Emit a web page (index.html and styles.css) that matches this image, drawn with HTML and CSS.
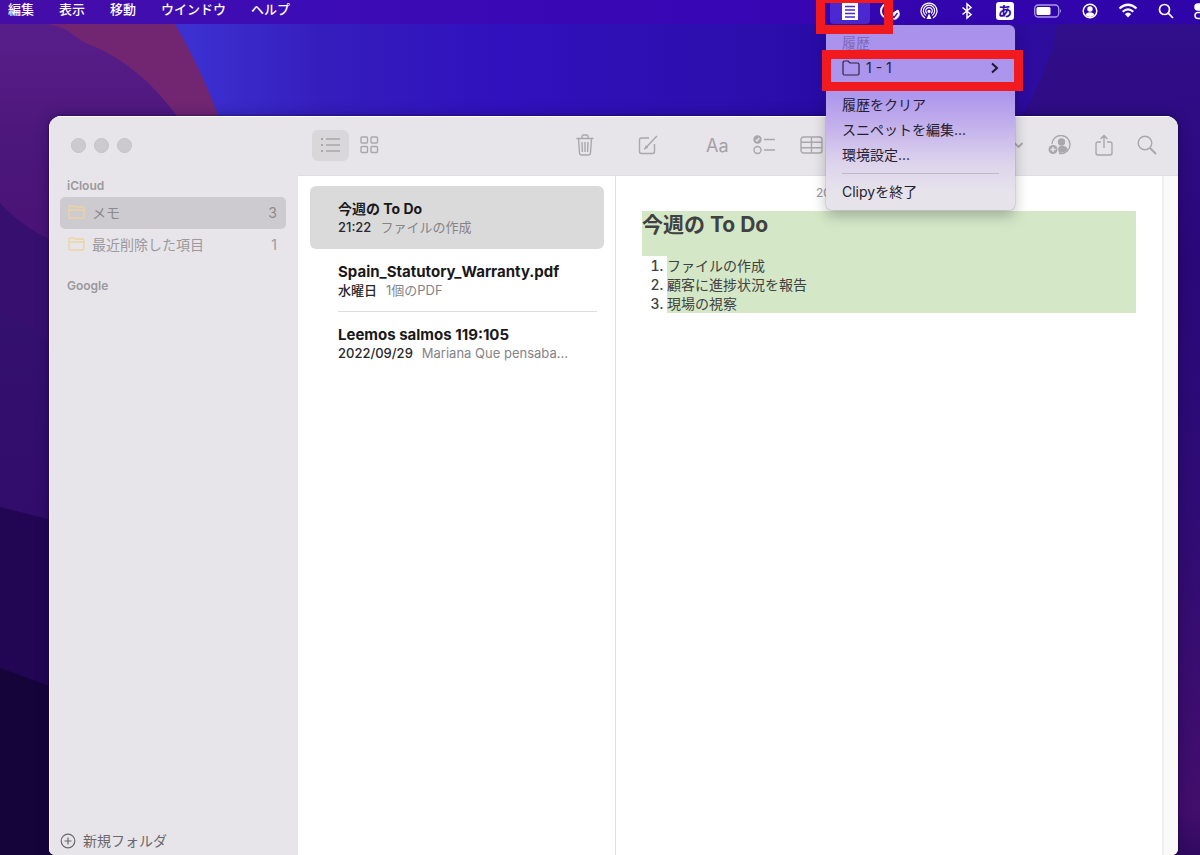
FILE: index.html
```html
<!DOCTYPE html>
<html lang="ja">
<head>
<meta charset="utf-8">
<title>メモ</title>
<link rel="stylesheet" href="styles.css">
</head>
<body class="desktop">
<svg class="wallpaper" viewBox="0 0 1200 855" preserveAspectRatio="none" aria-hidden="true">
  <defs>
    <linearGradient id="blue" x1="0" y1="0" x2="1" y2="0">
      <stop offset="0.16" stop-color="#3c30d0"/><stop offset="0.27" stop-color="#351dbd"/>
      <stop offset="0.42" stop-color="#3011bd"/><stop offset="0.6" stop-color="#2c0fae"/>
      <stop offset="0.72" stop-color="#270aa4"/><stop offset="1" stop-color="#320e98"/>
    </linearGradient>
    <linearGradient id="right" x1="0" y1="0" x2="0" y2="1">
      <stop offset="0" stop-color="#320f8c"/><stop offset="0.3" stop-color="#2a087a"/>
      <stop offset="0.6" stop-color="#2f0c74"/><stop offset="0.95" stop-color="#430e6c"/><stop offset="1" stop-color="#300a60"/>
    </linearGradient>
    <linearGradient id="plum" x1="0" y1="0" x2="0" y2="1">
      <stop offset="0.08" stop-color="#571d88"/><stop offset="0.5" stop-color="#4c177b"/><stop offset="1" stop-color="#491374"/>
    </linearGradient>
    <linearGradient id="indigo" x1="0" y1="0" x2="0" y2="1">
      <stop offset="0" stop-color="#34106f"/><stop offset="1" stop-color="#2d0763"/>
    </linearGradient>
  </defs>
  <rect width="1200" height="855" fill="url(#blue)"/>
  <path d="M1060 0Q1056 60 1022 116V855H1200V0Z" fill="url(#right)"/>
  <path d="M0 0H160Q196 55 220 120V300H0Z" fill="#722672"/>
  <path d="M0 24H48C70 28 72 36 88 44C125 58 155 85 180 120V260H0Z" fill="url(#plum)"/>
  <path d="M0 203Q25 230 60 244V855H0Z" fill="#37106f"/>
  <path d="M0 312Q30 325 60 352V855H0Z" fill="url(#indigo)"/>
  <path d="M0 507L60 522V855H0Z" fill="#220653"/>
  <path d="M0 668L60 690V855H0Z" fill="#150439"/>
</svg>

<header class="menubar">
  <nav class="menubar-menus">
    <button>編集</button><button>表示</button><button>移動</button><button>ウインドウ</button><button>ヘルプ</button>
  </nav>
  <div class="status">
    <button class="clipy" aria-label="Clipy"><svg width="18" height="20" viewBox="0 0 18 20"><path fill="#fff" d="M1 1H17V19H1Z"/><path stroke="#4b28d0" stroke-width="1.5" d="M4 5.5H14M4 9H14M4 12.5H14M4 16H14"/></svg></button>
    <svg width="22" height="20" viewBox="0 0 22 20" fill="none" stroke="#fff" stroke-width="2"><path d="M11 2A8 8 0 0 0 3 10A7 7 0 0 0 9 17"/><path d="M7 8Q8 12 12 12"/><path fill="#fff" stroke-width="1" d="M11.500 14Q15 12 20 9Q23 14 19 17.500Q15 20 11.500 14Z"/><path stroke="#3706b0" stroke-width="1.300" d="M14 14.500L16 16.500L19.500 12"/></svg>
    <svg width="18" height="18" viewBox="0 0 18 18" fill="none" stroke="#fff" stroke-width="1.2"><path d="M5 16A8 8 0 1 1 13 16M6 13.5A5.6 5.6 0 1 1 12 13.5M7 11.5A3.3 3.3 0 1 1 11 11.5"/><circle cx="9" cy="9.3" r="1" fill="#fff"/><path fill="#fff" stroke="none" d="M9 11.500L11.500 17H6.500Z"/></svg>
    <svg width="18" height="18" viewBox="0 0 18 18" fill="none" stroke="#fff" stroke-width="1.5"><path d="M4.500 5.500L13 12.500L9 16V2L13 5.500L4.500 12.500"/></svg>
    <span class="ime">あ</span>
    <svg width="28" height="18" viewBox="0 0 28 18"><rect x=".7" y="3" width="24" height="12" rx="3.500" fill="none" stroke="#a99be6" stroke-width="1.3"/><rect x="2.500" y="5" width="14" height="8" rx="1.500" fill="#fff"/><path fill="#a99be6" d="M26 7Q28 9 26 11Z"/></svg>
    <svg width="16" height="18" viewBox="0 0 16 18"><circle cx="8" cy="9" r="6.800" fill="none" stroke="#fff" stroke-width="1.500"/><circle cx="8" cy="7" r="2.700" fill="#fff"/><path fill="#fff" d="M3.500 13Q4.500 10.300 8 10.300T12.500 13Q8 17 3.500 13Z"/></svg>
    <svg width="20" height="18" viewBox="0 0 20 18" fill="none" stroke="#fff" stroke-width="2.200"><path d="M1.500 6.500Q10-1 18.500 6.500M4.700 9.800Q10 5 15.300 9.800"/><path fill="#fff" stroke="none" d="M6.800 12Q10 9 13.200 12L10 15.500Z"/></svg>
    <svg width="16" height="18" viewBox="0 0 16 18" fill="none" stroke="#fff" stroke-width="1.700"><circle cx="6.500" cy="7.500" r="5"/><path d="M10.200 11.200L15 16"/></svg>
    <svg width="16" height="18" viewBox="0 0 16 18" fill="none" stroke="#fff" stroke-width="1.500"><rect x="1" y="2" width="14" height="6" rx="3" fill="#fff"/><rect x="1" y="10.500" width="14" height="6" rx="3"/></svg>
  </div>
</header>

<main class="window">
  <aside class="sidebar">
    <div class="lights"><span></span><span></span><span></span></div>
    <h2 class="account">iCloud</h2>
    <button class="folder folder-selected"><svg width="17" height="14" viewBox="0 0 17 14"><path d="M1 11V2.500Q1 1 2.500 1H5.500L7 2H14.500Q16 2 16 3.500V11.500Q16 13 14.500 13H2.500Q1 13 1 11ZM1 5H16"/></svg><span class="folder-name">メモ</span><span class="count">3</span></button>
    <button class="folder"><svg width="17" height="14" viewBox="0 0 17 14"><path d="M1 11V2.500Q1 1 2.500 1H5.500L7 2H14.500Q16 2 16 3.500V11.500Q16 13 14.500 13H2.500Q1 13 1 11ZM1 5H16"/></svg><span class="folder-name">最近削除した項目</span><span class="count">1</span></button>
    <h2 class="account account-next">Google</h2>
    <button class="new-folder"><svg width="16" height="16" viewBox="0 0 16 16" fill="none" stroke="#6a686c" stroke-width="1.200"><circle cx="8" cy="8" r="6.800"/><path d="M8 4.500V11.500M4.500 8H11.500"/></svg>新規フォルダ</button>
  </aside>

  <section class="notes">
    <div class="toolbar toolbar-notes">
      <button class="tool tool-on" aria-label="リスト表示"><svg width="21" height="16" viewBox="0 0 21 16"><path d="M6 2H20M6 8H20M6 14H20"/><path stroke-width="2" d="M1 2H3M1 8H3M1 14H3"/></svg></button>
      <button class="tool" aria-label="ギャラリー表示"><svg width="19" height="18" viewBox="0 0 19 18"><rect x="1" y="1" width="6.500" height="6" rx="1"/><rect x="11" y="1" width="6.500" height="6" rx="1"/><rect x="1" y="10.500" width="6.500" height="6" rx="1"/><rect x="11" y="10.500" width="6.500" height="6" rx="1"/></svg></button>
      <button class="tool push" aria-label="削除"><svg width="18" height="22" viewBox="0 0 18 22"><path d="M.5 4.500H17.500M2.500 4.500L3.500 19Q3.700 21 5.500 21H12.500Q14.300 21 14.500 19L15.500 4.500M6 4.500V2.500Q6 1 7.500 1H10.500Q12 1 12 2.500V4.500M6 8L6.400 18M9 8V18M12 8L11.600 18"/></svg></button>
    </div>
    <div class="note-list">
      <article class="note note-selected"><h3>今週の To Do</h3><p><time>21:22</time>ファイルの作成</p></article>
      <article class="note note-ruled"><h3 class="latin">Spain_Statutory_Warranty.pdf</h3><p><time>水曜日</time>1個のPDF</p></article>
      <article class="note"><h3 class="latin">Leemos salmos 119:105</h3><p><time>2022/09/29</time>Mariana Que pensaba...</p></article>
    </div>
  </section>

  <section class="editor">
    <div class="toolbar toolbar-editor">
      <button class="tool tool-compose" aria-label="新規メモ"><svg width="20" height="20" viewBox="0 0 20 20"><path d="M11 3H3.500Q1.500 3 1.500 5V16.500Q1.500 18.500 3.500 18.500H14.500Q16.500 18.500 16.500 16.500V9"/><path d="M8 12.500L17.500 2.500L19 1"/><path d="M7 13.500L8 11.500L9 12.500Z"/></svg></button>
      <button class="tool tool-format" aria-label="フォーマット">Aa</button>
      <button class="tool" aria-label="チェックリスト"><svg width="23" height="20" viewBox="0 0 23 20"><circle cx="4.500" cy="4.500" r="3.500" fill="#a9a7ab"/><path stroke="#e7e5e9" d="M2.800 4.800L4 6L6.300 3"/><circle cx="4.500" cy="15" r="3.500"/><path stroke-width="1.600" d="M11 4.500H22M11 15H22"/></svg></button>
      <button class="tool" aria-label="表"><svg width="23" height="18" viewBox="0 0 23 18"><rect x="1" y="1" width="21" height="16" rx="2.500"/><path d="M1 6.300H22M1 11.700H22M11.500 1V17"/></svg></button>
      <button class="tool push" aria-label="メディア"><svg width="11" height="8" viewBox="0 0 11 8"><path stroke-width="1.800" d="M1.500 2L5.500 6L9.500 2"/></svg></button>
      <button class="tool" aria-label="共同制作"><svg width="23" height="20" viewBox="0 0 23 20"><path d="M4 9A9 9 0 1 1 13 18.500H11"/><circle cx="13.500" cy="7" r="3" fill="#a9a7ab"/><path fill="#a9a7ab" d="M11 15Q10 11.500 14 11.500Q18 11.500 19 14.500Q16 17.500 11.500 17Z"/><circle cx="5" cy="14.500" r="4.500" fill="#a9a7ab" stroke="none"/><path stroke="#e7e5e9" d="M5 12V17M2.500 14.500H7.500"/></svg></button>
      <button class="tool" aria-label="共有"><svg width="18" height="22" viewBox="0 0 18 22"><path d="M6 8H3Q1 8 1 10V19Q1 21 3 21H15Q17 21 17 19V10Q17 8 15 8H12M9 14V1.500M5.500 5L9 1.500L12.500 5"/></svg></button>
      <button class="tool" aria-label="検索"><svg width="20" height="20" viewBox="0 0 20 20"><circle cx="8" cy="8" r="6.800"/><path stroke-width="2" d="M13 13L19 19"/></svg></button>
    </div>
    <div class="editor-body">
      <div class="page">
        <div class="date">20</div>
        <h1 class="note-title">今週の To Do</h1>
        <ol class="todo"><li>ファイルの作成</li><li>顧客に進捗状況を報告</li><li>現場の視察</li></ol>
      </div>
      <div class="gutter"></div>
    </div>
  </section>
</main>

<div class="menu" role="menu">
  <div class="menu-label">履歴</div>
  <button class="menu-item" role="menuitem"><svg width="18" height="16" viewBox="0 0 18 16" fill="none" stroke="#2c2340" stroke-width="1.200"><path d="M1 3Q1 1 3 1H6L8 3H15.500Q17 3 17 4.500V13.500Q17 15 15.500 15H2.500Q1 15 1 13.500Z"/></svg><span>1 - 1</span><svg class="push" width="9" height="12" viewBox="0 0 9 12" fill="none" stroke="#1d1730" stroke-width="2"><path d="M2 1.500L7 6L2 10.500"/></svg></button>
  <hr>
  <button class="menu-item" role="menuitem">履歴をクリア</button>
  <button class="menu-item" role="menuitem">スニペットを編集...</button>
  <button class="menu-item" role="menuitem">環境設定...</button>
  <hr>
  <button class="menu-item" role="menuitem">Clipyを終了</button>
</div>
<div class="mark mark-icon"></div>
<div class="mark mark-row"></div>
</body>
</html>
```
FILE: styles.css
```css
* { box-sizing: border-box; }

.desktop {
  position: relative;
  display: flex;
  flex-direction: column;
  min-height: 100vh;
  margin: 0;
  overflow: hidden;
  background: #2d0fae;
  font-family: Inter, "Noto Sans CJK JP", sans-serif;
  font-size: 14px;
}

button {
  margin: 0;
  padding: 0;
  border: 0;
  background: none;
  color: inherit;
  font: inherit;
  text-align: left;
}

h1, h2, h3, p, ol { margin: 0; padding: 0; }
svg { flex: none; display: block; }
.push { margin-left: auto; }

.wallpaper {
  position: absolute;
  inset: 0;
  width: 100%;
  height: 100%;
}

/* Menu bar */
.menubar {
  position: relative;
  display: flex;
  justify-content: space-between;
  height: 24px;
  overflow: hidden;
  background: linear-gradient(90deg, #460da6, #3c0cb6 25%, #3806b4 60%, #2e04a8);
  color: #fff;
}
.menubar-menus {
  display: flex;
  align-items: center;
  gap: 25px;
  padding: 0 8px 6px;
  font-size: 13px;
  font-weight: 500;
  line-height: 18px;
}
.status {
  display: flex;
  align-items: center;
  gap: 20px;
  margin-right: -10px;
  padding-bottom: 2px;
}
.clipy {
  display: flex;
  justify-content: center;
  width: 40px;
  margin: 0 -12px -2px 0;
  padding: 1px 0 3px;
  border-radius: 4px;
  background: #4b28d0;
}
.ime {
  width: 18px;
  border-radius: 3px;
  background: #fff;
  color: #3209ad;
  font-size: 14px;
  font-weight: 700;
  line-height: 18px;
  text-align: center;
}

/* Notes window */
.window {
  position: relative;
  display: flex;
  flex: 1;
  margin: 92px 22px 0 49px;
  overflow: hidden;
  border-radius: 12px 12px 6px 6px;
  background: #fff;
  box-shadow: 0 0 2px #14053c, 0 0 14px rgba(15, 0, 60, 0.4);
}

.sidebar {
  display: flex;
  flex-direction: column;
  width: 249px;
  padding: 0 12px 4px 11px;
  background: #e7e5e9;
  box-shadow: inset 0 1px #fff, inset 1px 0 #f8f7fa;
  color: #9b999d;
}
.lights {
  display: flex;
  gap: 8px;
  padding: 22px 11px;
}
.lights span {
  width: 15px;
  height: 15px;
  border: 1px solid #c4c2c6;
  border-radius: 50%;
  background: #cccacf;
}
.account {
  padding: 0 7px;
  font-size: 12px;
  font-weight: 600;
  line-height: 22px;
}
.account-next { padding-top: 14px; }
.folder {
  display: flex;
  align-items: center;
  gap: 7px;
  height: 32px;
  padding: 0 9px 2px 8px;
  border-radius: 5px;
}
.folder svg { fill: none; stroke: #ecd4a0; stroke-width: 1.3; }
.folder-selected { background: #cdcbcf; color: #8c8a8e; }
.count { margin-left: auto; }
.new-folder {
  display: flex;
  align-items: center;
  gap: 7px;
  margin-top: auto;
  line-height: 20px;
  color: #6a686c;
}

.toolbar {
  display: flex;
  align-items: center;
  height: 60px;
  padding-bottom: 2px;
  background: #e7e5e9;
  box-shadow: inset 0 1px #fff, inset 0 -1px #dfdde1;
}
.tool {
  color: #a3a1a5;
}
.tool svg {
  fill: none;
  stroke: #a9a7ab;
  stroke-width: 1.4;
}
.toolbar-notes {
  width: 318px;
  gap: 11px;
  padding-left: 14px;
  padding-right: 22px;
}
.tool-on {
  display: grid;
  place-items: center;
  width: 37px;
  height: 31px;
  border-radius: 6px;
  background: #d9d7da;
}
.toolbar-editor {
  gap: 24px;
  padding-left: 22px;
  padding-right: 21px;
}
.tool-compose { margin-right: 24px; }
.tool-format { font-size: 18px; }

.notes {
  display: flex;
  flex-direction: column;
  width: 318px;
}
.note-list {
  flex: 1;
  padding: 10px 11px 10px 12px;
  border-right: 1px solid #e0dfe1;
}
.note {
  height: 63px;
  margin-left: 28px;
  padding-top: 14px;
  color: #19181a;
}
.note h3 {
  font-size: 14px;
  font-weight: 700;
  line-height: 18px;
}
.note .latin { font-size: 15px; }
.note p {
  color: #858387;
  font-size: 13px;
  line-height: 18px;
}
.note time {
  margin-right: 9px;
  color: #29282b;
  font-weight: 500;
}
.note-selected {
  margin-left: 0;
  padding-left: 28px;
  border-radius: 6px;
  background: #dadadb;
}
.note-ruled {
  margin-right: 7px;
  border-bottom: 1px solid #dedddf;
}

.editor {
  display: flex;
  flex: 1;
  flex-direction: column;
}
.editor-body { display: flex; flex: 1; }
.page {
  flex: 1;
  padding: 7px 26px;
  color: #414141;
}
.date {
  padding-bottom: 8px;
  padding-left: 174px;
  color: #9b999d;
  font-size: 12px;
  line-height: 20px;
}
.note-title {
  height: 45px;
  background: #d4e8c8;
  font-size: 21px;
  font-weight: 700;
  line-height: 28px;
}
.todo {
  margin-left: 25px;
  background: #d4e8c8;
  line-height: 19px;
}
.todo li::marker { font-weight: 500; }
.gutter {
  width: 16px;
  border-left: 2px solid #efefef;
  background: #fafafa;
}

/* Clipy menu */
.menu {
  position: absolute;
  top: 25px;
  right: 185px;
  display: flex;
  flex-direction: column;
  width: 189px;
  padding: 5px 16px 6px;
  border-radius: 6px;
  background: linear-gradient(#a991ec, #ad97ec 38%, #bda9ec 50%, #ddd4ec 75%, #e6e3eb 90%);
  box-shadow: 0 0 1px #4a4066, 0 6px 14px rgba(0, 0, 0, 0.25);
  color: #242030;
  line-height: 25px;
}
.menu-label { color: #8069b8; }
.menu-item {
  display: flex;
  align-items: center;
  gap: 6px;
  height: 25px;
}
.menu hr {
  width: 100%;
  height: 12px;
  margin: 0;
  border: 0;
  background: linear-gradient(#bfb8ca, #bfb8ca) center / 100% 1px no-repeat;
}

/* Highlight frames */
.mark {
  position: absolute;
  border: 9px solid #f11a1e;
}
.mark-icon { top: -6px; right: 307px; width: 77px; height: 40px; }
.mark-row { top: 50px; right: 177px; width: 201px; height: 41px; }
```
